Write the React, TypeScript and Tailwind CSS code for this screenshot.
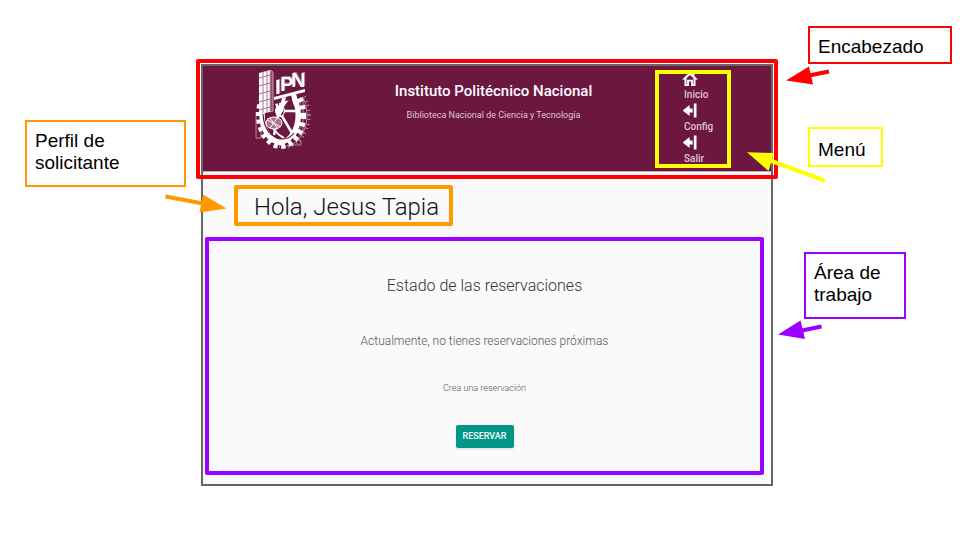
import type { ReactNode } from "react";

const floors = [78, 86, 94, 102, 110];

function Logo() {
  return (
    <svg viewBox="252 66 60 86" className="h-[86px] w-[60px] shrink-0" role="img" aria-label="Escudo IPN">
      <g fill="none" stroke="#b88ba2">
        <ellipse cx="285" cy="115" rx="22" ry="31" strokeWidth="1" />
        <ellipse cx="285" cy="115" rx="24" ry="32" strokeWidth="3" strokeDasharray="1 3 1 4" />
        <path d="M256 112v26h5v-24M293 139l8 2v4h-10M300 96v40M303 100v34" strokeWidth="1" />
      </g>
      <g fill="none" stroke="#fff">
        <ellipse cx="281" cy="115" rx="22" ry="31" strokeWidth="6" strokeDasharray="4 3.5" />
        <ellipse cx="280" cy="115" rx="18" ry="27" strokeWidth="5" />
        <path d="M279 111l15-20M279 111l-8-22M279 111h18M279 111l13 22M279 111l-5 24M281 89l-1 22" strokeWidth="2.5" />
        <path d="M262 112c0 17 7 29 20 31" strokeWidth="5" />
        <path d="M268 118c3 9 8 16 16 20" strokeWidth="2" />
        <path d="M291 95c10 12 10 26 2 42" strokeWidth="4" />
      </g>
      <ellipse cx="280" cy="111" rx="5" ry="6" fill="#fff" />
      <path d="M281 107c3 1 3 6 0 8" fill="none" stroke="#6b173f" strokeWidth="1.5" />
      <ellipse cx="274" cy="123" rx="8" ry="6" fill="#a9758f" stroke="#fff" />
      <path d="M267 120l14 7M270 118l8 11M278 117l-8 11" stroke="#fff" strokeWidth="1" />
      <path d="M263 114c1 15 8 24 20 25 5 0 8-2 11-6" fill="none" stroke="#6b173f" strokeWidth="1.2" />
      <path d="M272 104V68h33v28l-30 8z" fill="#6b173f" />
      <path d="M279 111l3-13 4-1-3 15zM291 95l5-1 3 9-5 3z" fill="#fff" />
      <path d="M259 73l11-3v42l-11 2z" fill="#fff" />
      <path d="M270 70l3 2v39l-3 1z" fill="#8b4a69" stroke="#c9a3b6" strokeWidth="1" />
      <g stroke="#a9758f" strokeWidth="1" fill="none">
        {floors.map((y) => (
          <path key={y} d={`M259 ${y}l11-3 3 2`} />
        ))}
        <path d="M263 72v41M267 71v41" />
      </g>
      <path d="M274 97l31-8v3l-31 8z" fill="#fff" />
      <text
        x="275 280 291"
        y="94 91 87"
        fontFamily="Liberation Sans Narrow, Liberation Sans, sans-serif"
        fontWeight="700"
        fontSize="20"
        fill="#fff"
        className="drop-shadow-[1px_-1px_0_#a9758f]"
      >
        IPN
      </text>
    </svg>
  );
}

function HomeIcon() {
  return (
    <svg viewBox="0 0 16 16" className="size-4" aria-hidden="true">
      <path
        d="M8 1L0 8.600h2.500V15h4.400v-4.600h2.200V15h4.400V8.600H16L12.500 5.300V2.500h-2v.9zM8 4l3.500 3.300v5.900h-.6V8.700H5.100v4.500h-.6V7.300z"
        fill="#fff"
        fillRule="evenodd"
      />
    </svg>
  );
}

function ExitIcon() {
  return (
    <svg viewBox="0 0 16 16" className="size-4" aria-hidden="true">
      <path d="M.6 7.500l7-5.500v3.500h3v4h-3V13zM11.800.5h2.700v14h-2.700z" fill="#fff" />
    </svg>
  );
}

function MenuItem({ icon, children }: { icon: ReactNode; children: ReactNode }) {
  return (
    <li>
      <a href="#" className="block text-[10px] leading-4 font-medium text-[#ddc5d1]">
        {icon}
        <span className="block pl-0.5">{children}</span>
      </a>
    </li>
  );
}

function Callout({ className, arrow, children }: { className: string; arrow: ReactNode; children: ReactNode }) {
  return (
    <div className={`relative border-2 bg-white px-2 text-[19px] leading-[22px] text-black ${className}`}>
      <p>{children}</p>
      {arrow}
    </div>
  );
}

export default function App() {
  return (
    <main className="flex min-h-screen items-start bg-white font-['Liberation_Sans',Arial,sans-serif]">
      <aside className="z-10 w-[201px] shrink-0 pt-[120px] pr-[15px] pl-[25px]">
        <Callout
          className="h-[67px] border-[#ff9900] pt-2"
          arrow={
            <svg viewBox="165 190 64 26" className="absolute top-[68px] -right-[45px] h-[26px] w-16" aria-hidden="true">
              <path d="M165.500 196.500L203 203.500" stroke="#ff9900" strokeWidth="4" />
              <path d="M226.500 208.500L203 194.500l-3.500 18z" fill="#ff9900" />
            </svg>
          }
        >
          Perfil de
          <br />
          solicitante
        </Callout>
      </aside>

      <div className="mt-16 min-w-0 flex-1 border-2 border-[#666] bg-[#fafafa] pb-[9px] font-[Roboto,sans-serif]">
        <header className="relative flex h-[106px] items-start border-b border-[#c9a9b8] bg-[#6b173f] pr-10 pl-[49px]">
          <Logo />
          <div className="flex-1 pt-[15px] pl-5 text-center">
            <h1 className="text-[15px] leading-5 font-medium text-white">Instituto Politécnico Nacional</h1>
            <p className="mt-1.5 text-[9px] leading-4 text-[#ddc5d1]">Biblioteca Nacional de Ciencia y Tecnología</p>
          </div>
          <nav
            aria-label="Menú"
            className="mt-1 h-[98px] w-[76px] pt-px pl-[27px] outline-4 -outline-offset-4 outline-[#ffff00]"
          >
            <ul>
              <MenuItem icon={<HomeIcon />}>Inicio</MenuItem>
              <MenuItem icon={<ExitIcon />}>Config</MenuItem>
              <MenuItem icon={<ExitIcon />}>Salir</MenuItem>
            </ul>
          </nav>
          <div className="pointer-events-none absolute -inset-x-[7px] -top-[7px] -bottom-2 rounded-xs border-4 border-[#ff0000]" />
        </header>

        <h2 className="mt-[13px] ml-[31px] h-[41px] w-[219px] rounded-xs border-4 border-[#ff9900] pl-4 text-2xl leading-9 font-light whitespace-nowrap text-[#111]">
          Hola, Jesus Tapia
        </h2>

        <section className="mt-[11px] mr-[7px] ml-0.5 flex flex-col items-center rounded-xs border-4 border-[#9900ff] pt-[33px] pb-[23px] text-center">
          <h3 className="text-base leading-6 font-light text-[#333]">Estado de las reservaciones</h3>
          <p className="mt-[33px] text-xs leading-5 font-light text-[#555]">
            Actualmente, no tienes reservaciones próximas
          </p>
          <p className="mt-[29px] text-[9px] leading-4 font-light text-[#555]">Crea una reservación</p>
          <button
            type="button"
            className="mt-[29px] h-[23px] w-[58px] rounded-xs bg-[#009688] text-[9px] font-medium text-white shadow"
          >
            RESERVAR
          </button>
        </section>
      </div>

      <aside className="z-10 w-[187px] shrink-0 pt-[26px] pr-2 pl-[31px]">
        <Callout
          className="ml-1 h-[38px] border-[#ff0000] pt-2"
          arrow={
            <svg viewBox="785 65 46 22" className="absolute top-[37px] -left-[25px] h-[22px] w-[46px]" aria-hidden="true">
              <path d="M829 71.500L809 75.500" stroke="#ff0000" strokeWidth="4" />
              <path d="M786 80.500L809 66.500l4 18z" fill="#ff0000" />
            </svg>
          }
        >
          Encabezado
        </Callout>
        <Callout
          className="mt-[63px] ml-1 h-10 w-[75px] border-[#ffff00] pt-2.5"
          arrow={
            <svg viewBox="745 150 82 36" className="absolute top-[21px] -left-[65px] h-9 w-[82px]" aria-hidden="true">
              <path d="M824.500 180.500L770 160.500" stroke="#ffff00" strokeWidth="4" />
              <path d="M747 152.300L774 153l-5.500 18z" fill="#ffff00" />
            </svg>
          }
        >
          Menú
        </Callout>
        <Callout
          className="mt-[85px] h-[67px] w-[102px] border-[#9900ff] pt-2"
          arrow={
            <svg viewBox="777 319 46 22" className="absolute top-[65px] -left-[29px] h-[22px] w-[46px]" aria-hidden="true">
              <path d="M821.500 326.500L802 330.500" stroke="#9900ff" strokeWidth="4" />
              <path d="M778 334.500L800.500 320.500l4.500 18.500z" fill="#9900ff" />
            </svg>
          }
        >
          Área de
          <br />
          trabajo
        </Callout>
      </aside>
    </main>
  );
}
